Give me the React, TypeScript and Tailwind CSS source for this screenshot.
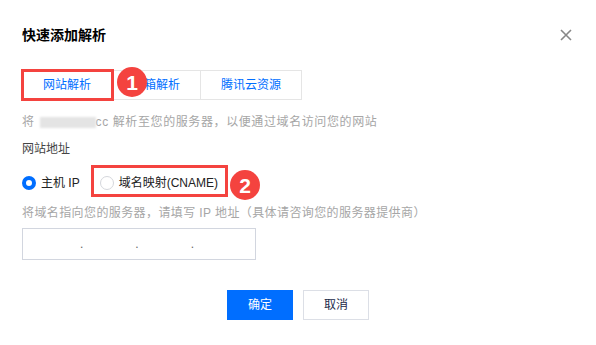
// App.tsx
const tabs = ['网站解析', '邮箱解析', '腾讯云资源'];

function CloseIcon() {
  return (
    <svg width="12" height="12" viewBox="0 0 12 12" className="text-[#888]">
      <path d="M1 1 L11 11 M11 1 L1 11" stroke="currentColor" strokeWidth="1.6" />
    </svg>
  );
}

function Badge({ n, className }: { n: string; className: string }) {
  return (
    <div
      className={`absolute w-[30px] h-[30px] rounded-full bg-[#f4433f] text-white flex items-center justify-center text-[21px] font-bold leading-none ${className}`}
    >
      {n}
    </div>
  );
}

export default function App() {
  return (
    <div className="relative w-[596px] h-[345px] bg-white text-[12px] text-[#333] font-['Liberation_Sans','Noto_Sans_CJK_SC',sans-serif]">
      <div className="flex items-center justify-between pl-[22px] pr-[24px] pt-[25px]">
        <h2 className="text-[14px] leading-[20px] font-semibold text-black">快速添加解析</h2>
        <CloseIcon />
      </div>

      <div className="px-[22px]">
        <div className="mt-[25px] flex w-fit border border-[#e5e5e5] h-[30px]">
          {tabs.map((t, i) => (
            <div
              key={t}
              className={`px-5 flex items-center text-[#006eff] ${i > 0 ? 'border-l border-[#e5e5e5]' : ''}`}
            >
              {t}
            </div>
          ))}
        </div>

        <p className="mt-[13px] leading-[18px] text-[#a6a6a6] tracking-[0.6px] flex items-center">
          将
          <span className="inline-block ml-[5px] w-[56px] h-[11px] bg-[#e4e4e4] blur-[1px]" />
          cc 解析至您的服务器，以便通过域名访问您的网站
        </p>

        <p className="mt-[9px] leading-[18px] text-[#444]">网站地址</p>

        <div className="mt-[15px] h-[20px] flex items-center">
          <label className="flex items-center gap-[5px]">
            <span className="w-[14px] h-[14px] rounded-full border-[4px] border-[#006eff] bg-white" />
            <span className="text-[#222]">主机 IP</span>
          </label>
          <label className="flex items-center gap-[5px] ml-[20px]">
            <span className="w-[14px] h-[14px] rounded-full border border-[#d5d7dc] bg-white" />
            <span className="text-[#222]">域名映射(CNAME)</span>
          </label>
        </div>

        <p className="mt-[11px] leading-[18px] text-[#a6a6a6] tracking-[0.4px]">
          将域名指向您的服务器，请填写 IP 地址（具体请咨询您的服务器提供商）
        </p>

        <div className="mt-[6px] w-[234px] h-[32px] border border-[#d2d6df] flex items-center pl-[57px] gap-[52px] text-[#666]">
          <span>.</span>
          <span>.</span>
          <span>.</span>
        </div>
      </div>

      <div className="mt-[30px] flex justify-center gap-[10px]">
        <button className="w-[66px] h-[30px] bg-[#006eff] text-white">确定</button>
        <button className="w-[66px] h-[30px] border border-[#dcdfe6] text-[#1b2a4a] bg-white">取消</button>
      </div>

      {/* annotations */}
      <div className="absolute left-[21px] top-[69px] w-[93px] h-[32px] border-[3px] border-[#f4433f]" />
      <Badge n="1" className="left-[117px] top-[67px]" />
      <div className="absolute left-[91px] top-[165px] w-[137px] h-[32px] border-[3px] border-[#f4433f]" />
      <Badge n="2" className="left-[230px] top-[170px]" />
    </div>
  );
}
